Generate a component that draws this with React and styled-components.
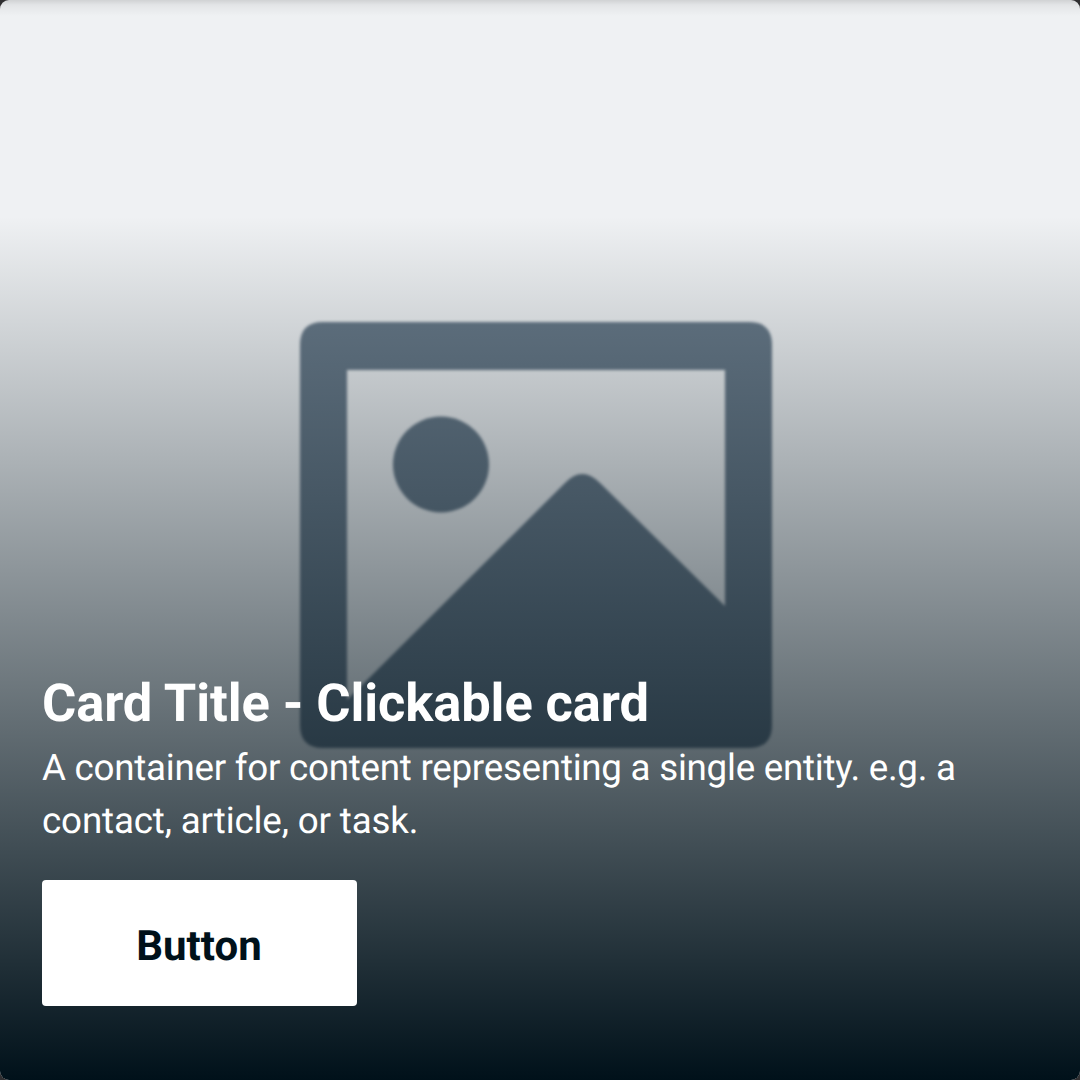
import React from "react";
import styled, { createGlobalStyle } from "styled-components";

const GlobalStyle = createGlobalStyle`
  * { box-sizing: border-box; }
  body { margin: 0; background: #302f31; }
`;

const Card = styled.article`
  display: grid;
  width: 1080px;
  height: 1080px;
  overflow: hidden;
  border-radius: 9px;
  background: #eff1f3;
  cursor: pointer;
  font-family: Roboto, "Liberation Sans", sans-serif;
  text-rendering: geometricPrecision;
`;

const Media = styled.div`
  grid-area: 1 / 1;
  display: flex;
  justify-content: center;
  padding: 322px 8px 0 0;
`;

const Placeholder = styled.svg`
  display: block;
  width: 472px;
  height: 426px;
  overflow: visible;
  fill: #687988;
  filter: blur(1.8px);
`;

const Overlay = styled.div`
  grid-area: 1 / 1;
  z-index: 1;
  display: flex;
  flex-direction: column;
  justify-content: flex-end;
  align-items: flex-start;
  padding: 0 42px 74px;
  color: #fff;
  background:
    linear-gradient(rgba(0, 0, 0, 0.13), rgba(0, 0, 0, 0.05) 5px, transparent 16px),
    linear-gradient(rgba(0, 17, 26, 0) 216px, #00111a 1080px);
`;

const Title = styled.h2`
  margin: 0;
  font-size: 52.5px;
  line-height: 63px;
  font-weight: 700;
  letter-spacing: -0.11px;
`;

const Description = styled.p`
  margin: 6px 0 33px;
  font-size: 36.75px;
  line-height: 53px;
  font-weight: 400;
`;

const Line = styled.span`
  display: block;
  white-space: nowrap;
  letter-spacing: ${({ $tracking }) => $tracking}px;
`;

const Button = styled.button`
  width: 315px;
  height: 126px;
  padding: 8px 1px 0 0;
  border: 0;
  border-radius: 4px;
  background: #fff;
  color: #00111a;
  font: 700 42px/50px Roboto, "Liberation Sans", sans-serif;
  text-rendering: geometricPrecision;
`;

export default function App() {
  return (
    <>
      <GlobalStyle />
      <Card>
        <Media>
          <Placeholder viewBox="0 0 472 426" aria-hidden="true">
            <path
              fillRule="evenodd"
              d="M23 0H449Q472 0 472 23V403Q472 426 449 426H23Q0 426 0 403V23Q0 0 23 0Z
                 M47 48V378L265 161Q282 143 300 161L425 284V48Z"
            />
            <circle cx="141" cy="142.5" r="48" />
          </Placeholder>
        </Media>
        <Overlay>
          <Title>Card Title - Clickable card</Title>
          <Description>
            <Line $tracking={-0.26}>A container for content representing a single entity. e.g. a</Line>{" "}
            <Line $tracking={-0.15}>contact, article, or task.</Line>
          </Description>
          <Button type="button">Button</Button>
        </Overlay>
      </Card>
    </>
  );
}
